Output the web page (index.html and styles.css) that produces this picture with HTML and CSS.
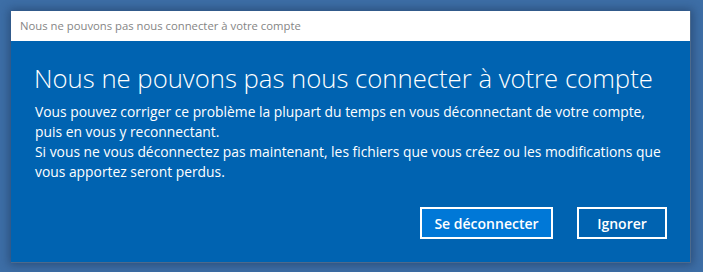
FILE: index.html
```html
<!DOCTYPE html>
<html lang="fr">
<head>
<meta charset="utf-8">
<link rel="stylesheet" href="styles.css">
</head>
<body>
<div class="window">
  <div class="titlebar">Nous ne pouvons pas nous connecter à votre compte</div>
  <div class="content">
    <h1 class="heading">Nous ne pouvons pas nous connecter à votre compte</h1>
    <p class="message">Vous pouvez corriger ce problème la plupart du temps en vous déconnectant de votre compte,<br>puis en vous y reconnectant.<br>Si vous ne vous déconnectez pas maintenant, les fichiers que vous créez ou les modifications que<br>vous apportez seront perdus.</p>
    <div class="actions">
      <button class="btn btn-primary">Se déconnecter</button>
      <button class="btn">Ignorer</button>
    </div>
  </div>
</div>
</body>
</html>
```
FILE: styles.css
```css
html, body {
  margin: 0;
  padding: 0;
  height: 100%;
}
body {
  background: #3d6ea6;
  font-family: "Open Sans", "Noto Sans", sans-serif;
  overflow: hidden;
}
.window {
  margin: 11px 0 0 11px;
  width: 680px;
  height: 252px;
  box-sizing: border-box;
  background: #0063b1;
  border-right: 1px solid #4d6a8c;
  border-bottom: 1px solid #4d6a8c;
  box-shadow: 0 0 9px 2px rgba(20, 40, 70, 0.45);
  display: flex;
  flex-direction: column;
}
.titlebar {
  height: 30px;
  background: #fff;
  color: #858585;
  font-size: 11.3px;
  line-height: 30px;
  padding-left: 9px;
  flex: none;
}
.content {
  padding: 0 23px 0 23px;
  color: #fff;
  display: flex;
  flex-direction: column;
}
.heading {
  margin: 21px 0 0 0;
  font-weight: 300;
  font-size: 25.7px;
  line-height: 34px;
  white-space: nowrap;
}
.message {
  margin: 6px 0 0 1px;
  font-size: 13.85px;
  line-height: 20px;
  white-space: nowrap;
}
.actions {
  display: flex;
  justify-content: flex-end;
  gap: 24px;
  margin-top: 25px;
}
.btn {
  height: 32px;
  box-sizing: border-box;
  border: 2px solid #fff;
  background: #0063b1;
  color: #fff;
  font-family: inherit;
  font-weight: 600;
  font-size: 14px;
  padding: 0;
  width: 90px;
}
.btn-primary {
  background: #0078d7;
  width: 133px;
}
```
